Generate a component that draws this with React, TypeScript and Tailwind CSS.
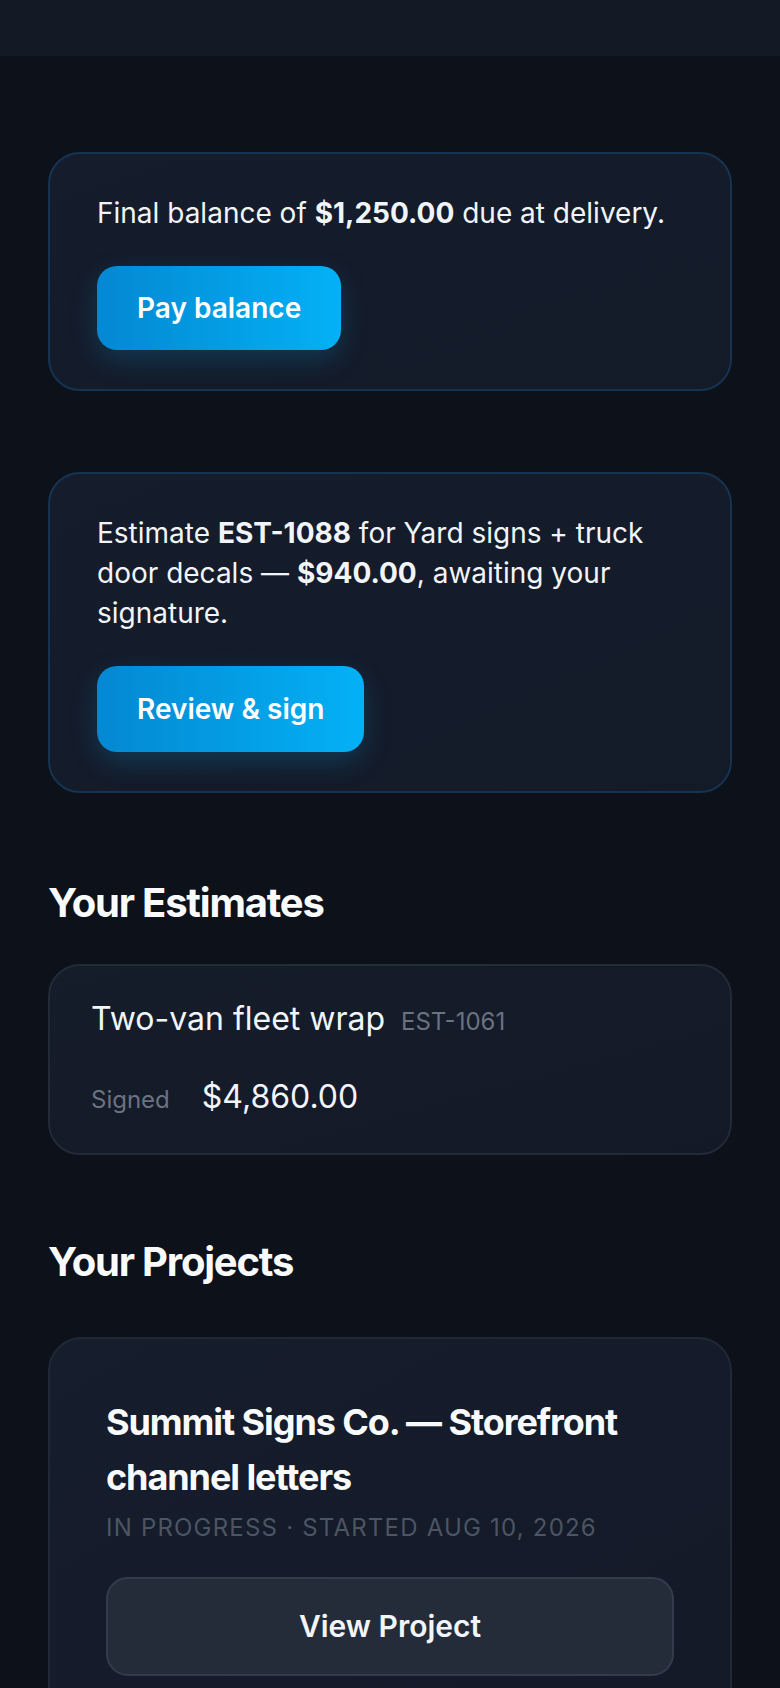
import React from "react";

export default function App() {
  return (
    <div
      className="min-h-[1688px] w-full bg-[#0d111a] text-[#f1f5f9]"
      style={{ fontFamily: "Inter, 'Noto Sans', sans-serif" }}
    >
      <div className="h-[56px] w-full bg-[#131925]" />
      <main className="px-12 pt-[96px]">
        <section className="rounded-[32px] border-2 border-[#163452] bg-gradient-to-br from-[#151c2b] to-[#131a28] px-[47px] pt-[39px] pb-[39px]">
          <p className="text-[28px] leading-[40px] text-[#f1f5f9]">
            Final balance of <span className="font-bold">$1,250.00</span> due at delivery.
          </p>
          <button className="mt-[33px] flex h-[84px] items-center rounded-[20px] bg-gradient-to-r from-[#0488d2] to-[#04b1f6] px-10 text-[28px] font-semibold text-white shadow-[0_10px_28px_rgba(14,165,233,0.22)]">
            Pay balance
          </button>
        </section>

        <section className="mt-[81px] rounded-[32px] border-2 border-[#163452] bg-gradient-to-br from-[#151c2b] to-[#131a28] px-[47px] pt-[39px] pb-[39px]">
          <p className="text-[28px] leading-[40px] text-[#f1f5f9]">
            Estimate <span className="font-bold">EST-1088</span> for Yard signs + truck door decals —{" "}
            <span className="font-bold">$940.00</span>, awaiting your signature.
          </p>
          <button className="mt-[33px] flex h-[86px] items-center rounded-[20px] bg-gradient-to-r from-[#0488d2] to-[#04b1f6] px-10 text-[28px] font-semibold text-white shadow-[0_10px_28px_rgba(14,165,233,0.22)]">
            Review &amp; sign
          </button>
        </section>

        <h2 className="mt-[86px] text-[40px] font-bold leading-[48px] tracking-[-0.03em] text-[#f8fafc]">
          Your Estimates
        </h2>
        <section className="mt-[37px] rounded-[32px] border-2 border-[#232b38] bg-gradient-to-br from-[#151c2a] to-[#131927] px-[41px] py-[33px]">
          <div className="flex items-baseline gap-4">
            <span className="text-[32px] leading-[40px] text-[#f1f5f9]">Two-van fleet wrap</span>
            <span className="text-[24px] leading-[40px] text-[#6b7280]">EST-1061</span>
          </div>
          <div className="mt-[35px] flex items-baseline gap-8">
            <span className="text-[24px] leading-[40px] text-[#6b7280]">Signed</span>
            <span className="text-[32px] leading-[40px] text-[#f1f5f9]">$4,860.00</span>
          </div>
        </section>

        <h2 className="mt-[83px] text-[40px] font-bold leading-[48px] tracking-[-0.03em] text-[#f8fafc]">
          Your Projects
        </h2>
        <section className="mt-[51px] rounded-[34px] border-2 border-[#212937] bg-gradient-to-br from-[#161d2c] to-[#131927] px-[56px] pt-[56px] pb-[56px]">
          <h3 className="text-[36px] font-bold leading-[55px] tracking-[-0.03em] text-[#f8fafc]">
            Summit Signs Co. — Storefront channel letters
          </h3>
          <p className="mt-[7px] text-[24px] uppercase leading-[32px] tracking-wider text-[#4b5563]">
            In progress · Started Aug 10, 2026
          </p>
          <button className="mt-[33px] flex h-[99px] w-full items-center justify-center rounded-[22px] border-2 border-[#343c4b] bg-[#242c3a] text-[30px] font-semibold text-[#f1f5f9]">
            View Project
          </button>
        </section>
      </main>
    </div>
  );
}
